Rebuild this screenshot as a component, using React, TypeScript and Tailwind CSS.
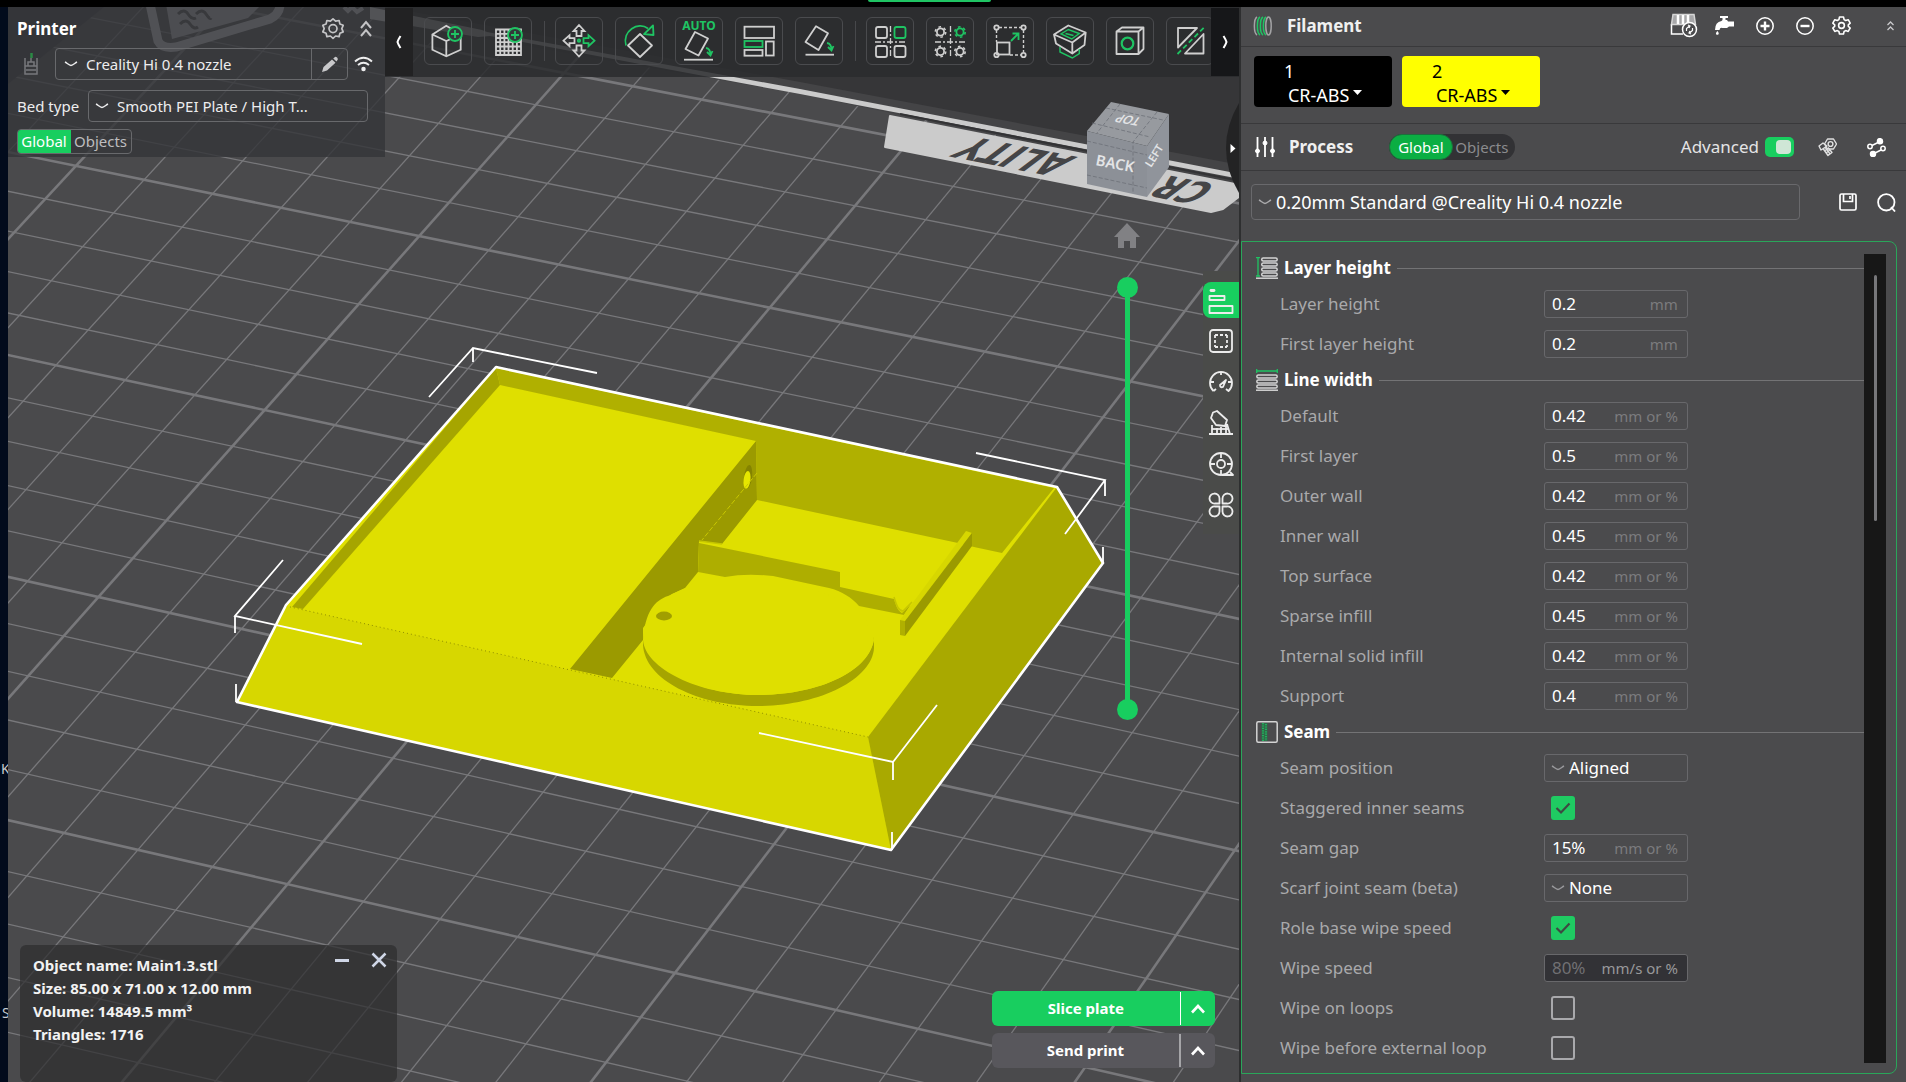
import { useState } from "react"
import type { ReactNode } from "react"
import clsx from "clsx"

const GREEN = "#1fc463"

type Row = {
  label: string
  kind: "number" | "select" | "check"
  value?: string
  unit?: string
  checked?: boolean
  disabled?: boolean
}

const sections: { title: string; icon: ReactNode; rows: Row[] }[] = [
  {
    title: "Layer height",
    icon: <LayerHeightIcon />,
    rows: [
      { label: "Layer height", kind: "number", value: "0.2", unit: "mm" },
      { label: "First layer height", kind: "number", value: "0.2", unit: "mm" },
    ],
  },
  {
    title: "Line width",
    icon: <LineWidthIcon />,
    rows: [
      { label: "Default", kind: "number", value: "0.42", unit: "mm or %" },
      { label: "First layer", kind: "number", value: "0.5", unit: "mm or %" },
      { label: "Outer wall", kind: "number", value: "0.42", unit: "mm or %" },
      { label: "Inner wall", kind: "number", value: "0.45", unit: "mm or %" },
      { label: "Top surface", kind: "number", value: "0.42", unit: "mm or %" },
      { label: "Sparse infill", kind: "number", value: "0.45", unit: "mm or %" },
      { label: "Internal solid infill", kind: "number", value: "0.42", unit: "mm or %" },
      { label: "Support", kind: "number", value: "0.4", unit: "mm or %" },
    ],
  },
  {
    title: "Seam",
    icon: <SeamIcon />,
    rows: [
      { label: "Seam position", kind: "select", value: "Aligned" },
      { label: "Staggered inner seams", kind: "check", checked: true },
      { label: "Seam gap", kind: "number", value: "15%", unit: "mm or %" },
      { label: "Scarf joint seam (beta)", kind: "select", value: "None" },
      { label: "Role base wipe speed", kind: "check", checked: true },
      { label: "Wipe speed", kind: "number", value: "80%", unit: "mm/s or %", disabled: true },
      { label: "Wipe on loops", kind: "check", checked: false },
      { label: "Wipe before external loop", kind: "check", checked: false },
    ],
  },
]

function LayerHeightIcon() {
  return (
    <svg width="22" height="22" viewBox="0 0 22 22" fill="none" aria-hidden="true">
      <path d="M0 0.7h4M0 19h4M2 1v18" stroke={GREEN} strokeWidth="1.3" />
      {[1, 6, 11, 16].map((y) => (
        <rect key={y} x="5.7" y={y} width="15.5" height="3" rx="1.5" stroke="#d4d4d4" strokeWidth="1.5" />
      ))}
      <path d="M0 21.2h22" stroke="#d4d4d4" strokeWidth="1.5" />
    </svg>
  )
}

function LineWidthIcon() {
  return (
    <svg width="22" height="22" viewBox="0 0 22 22" fill="none" aria-hidden="true">
      <path d="M0.7 0v4M21.3 0v4M1 2h20" stroke={GREEN} strokeWidth="1.3" />
      {[6, 11, 16].map((y) => (
        <rect key={y} x="0.8" y={y} width="20.4" height="3" rx="1.5" stroke="#d4d4d4" strokeWidth="1.5" />
      ))}
      <path d="M0 21.2h22" stroke="#d4d4d4" strokeWidth="1.5" />
    </svg>
  )
}

function SeamIcon() {
  return (
    <svg width="22" height="22" viewBox="0 0 22 22" fill="none" aria-hidden="true">
      <rect x="0.8" y="0.8" width="20.4" height="20.4" rx="1.5" stroke="#d4d4d4" strokeWidth="1.5" />
      <rect x="5.5" y="2" width="6" height="18" fill="#2f6b48" />
      <path d="M7 2v18M10 3v17" stroke={GREEN} strokeWidth="1.6" strokeDasharray="1.2 1.2" />
    </svg>
  )
}

function Chevron({ className }: { className?: string }) {
  return (
    <svg className={className} width="14" height="6" viewBox="0 0 14 6" fill="none" aria-hidden="true">
      <path d="M1 1c2 1 4 3.5 6 3.5S11 2 13 1" stroke="currentColor" strokeWidth="1.4" />
    </svg>
  )
}

// ---- build plate scene ----

const at = (a: number, b: number, c: number, k: number) => (a + b * k) / (1 + c * k)

// every fifth line is a bold one
const steps = (from: number, to: number) => Array.from({ length: to - from + 1 }, (_, i) => from + i)

function Grid() {
  return (
    <g stroke="#78787b">
      {steps(-8, 24).map((i) => {
        const k = i / 5
        const y1 = at(152, 188, -0.0423, k)
        const y2 = at(396, 192.6, -0.0366, k)
        const slope = (y2 - y1) / 1194
        return (
          <line
            key={`h${i}`}
            x1={0}
            y1={y1 - 8 * slope}
            x2={1250}
            y2={y2 + 48 * slope}
            strokeWidth={i % 5 === 0 ? 2.6 : 1.3}
          />
        )
      })}
      {steps(-19, 22).map((i) => {
        const k = i / 5
        const x1 = 967 + 402 * k
        const x2 = at(122, 459.8, -0.0155, k)
        const slope = (x2 - x1) / 1010
        return (
          <line
            key={`v${i}`}
            x1={x1 - 72 * slope}
            y1={0}
            x2={x2 + 18 * slope}
            y2={1100}
            strokeWidth={i % 5 === 0 ? 2.6 : 1.3}
          />
        )
      })}
    </g>
  )
}

function Model() {
  return (
    <g>
      <polygon points="496,367 1057,487 1103,563 891,850 237,702 286,605" fill="#dfdf00" />
      {/* front and right outside faces */}
      <polygon points="286,606 868,737 891,850 237,702" fill="#d7d700" />
      <polygon points="1057,487 1103,563 891,850 868,737" fill="#a9a900" />
      {/* back and left inside walls */}
      <polygon points="496,368 1054,488 1002,553 974,547 958,543 757,500 756,441 500,385" fill="#b0b000" />
      <polygon points="496,368 500,385 303,609 292,607" fill="#a6a500" />
      <polygon
        points="756,441 757,500 722,544 699,541 698,572 685,588 672,594 663,601 643,628 643,640 612,678 570,669"
        fill="#9b9a00"
      />
      {/* battery disc */}
      <path
        d="M643 633C644 668 700 695 758 695S872 672 874 637V648C872 680 818 706 758 706S645 680 643 645Z"
        fill="#a5a400"
      />
      <path d="M643 640C645 612 655 600 668 596L690 586L702 572L746 575H771L860 606L874 640C868 672 818 695 758 695S645 668 643 640Z" fill="#dfdf00" />
      <ellipse cx="664" cy="616" rx="8" ry="4.4" fill="#a19f00" />
      {/* divider rib */}
      <path
        d="M699 543L840 572V587L894 599C896 606 898 611 902 613L911 604L904 615L859 606C852 598 842 591 829 588L773 576Q746 573 725 577L698 572Z"
        fill="#aeae00"
      />
      <path d="M699 541L722 544M894 597C897 607 899 611 903 611L912 602" stroke="#c6c600" strokeWidth="1.5" fill="none" />
      {/* long bar */}
      <polygon points="966,531 972,533 905,621 900,620" fill="#d7d700" />
      <polygon points="972,533 972,546 905,636 905,621" fill="#9b9a00" />
      <polygon points="900,620 905,621 905,636 900,635" fill="#b0b000" />
      {/* slot in the wall */}
      <ellipse cx="748" cy="477" rx="4" ry="12" transform="rotate(7 748 477)" fill="#848300" />
      <ellipse cx="747" cy="480" rx="3.4" ry="9" transform="rotate(7 748 480)" fill="#e6e600" />
      <path d="M757 473L702 540" stroke="#c9c800" strokeDasharray="5 2" />
      <path d="M286 606L868 737" stroke="#8f8e00" strokeWidth="1" strokeDasharray="1 3" />
      <polygon
        points="496,367 1057,487 1103,563 891,850 237,702 286,605"
        fill="none"
        stroke="#ffffff"
        strokeWidth="2.6"
        strokeLinejoin="round"
      />
      <g stroke="#ffffff" strokeWidth="1.8" fill="none">
        <path d="M429 397L473 348L597 373M473 348V362" />
        <path d="M976 453L1105 480L1065 534M1105 480V496" />
        <path d="M283 560L235 616L362 644M235 616V633" />
        <path d="M759 733L893 762L937 705M893 762V780" />
        <path d="M236 684V702M892 832V850M1103 547V564" />
      </g>
    </g>
  )
}

function ViewCube() {
  return (
    <g fontFamily="'Noto Sans', sans-serif" fontWeight="600" fill="#e3e4e6">
      <polygon points="1111,102 1169,114 1147,146 1087,131" fill="#979a9f" />
      <polygon points="1087,131 1147,146 1147,197 1087,184" fill="#8c9097" />
      <polygon points="1147,146 1169,114 1169,167 1147,197" fill="#90949b" />
      <path
        d="M1120 104L1097 133M1157 112L1133 142V193M1106 108L1163 120M1092 123L1150 137M1087 141L1147 155M1087 175L1147 188"
        stroke="#6c7077"
        strokeWidth="0.8"
        strokeDasharray="4 2"
        fill="none"
      />
      <text fontSize="15" transform="translate(1095 165) rotate(11)">
        BACK
      </text>
      <text fontSize="12" transform="translate(1142 118) rotate(190) skewX(-25)">
        TOP
      </text>
      <text fontSize="11" transform="translate(1151 168) rotate(-58)">
        LEFT
      </text>
    </g>
  )
}

function Scene() {
  return (
    <svg
      className="absolute inset-0 h-full w-full"
      viewBox="8 7 1231 1075"
      preserveAspectRatio="xMinYMin slice"
      role="img"
      aria-label="Build plate"
    >
      <rect x="0" y="0" width="1906" height="1082" fill="#4a4a4c" />
      <Grid />
      <polygon points="8,7 104,7 8,84" fill="#3a3a3c" />
      {/* area behind the plate */}
      <polygon points="380,0 1240,0 1240,174 800,85 380,6" fill="#363638" />
      <polygon points="380,6 800,82 1240,165 1240,186 800,94 380,20" fill="#444446" />
      <polygon points="370,7 482,30 487,32 800,89 1240,174 1240,179 800,94 490,36 478,37 370,19" fill="#cbcbcb" />
      <polygon points="890,116 1240,185 1240,196 1223,209 1211,212 885,147" fill="#cbcbcb" stroke="#cbcbcb" strokeWidth="2" strokeLinejoin="round" />
      <path d="M900 114L1240 181" stroke="#333335" strokeWidth="2" />
      <g fontFamily="'DejaVu Sans', sans-serif" fontWeight="700" fontSize="33" fill="#454547">
        <text transform="translate(1078 157) rotate(191) skewX(-42)">ALITY</text>
        <text transform="translate(1219 185) rotate(191) skewX(-42)">CR</text>
      </g>
      {/* hot surface mark */}
      <path
        d="M150 4L158 41Q162 49 176 47L270 19Q280 14 280 4"
        fill="none"
        stroke="#c4c4c7"
        strokeWidth="9"
      />
      <polygon points="166,4 172,39 248,18 262,4" fill="#b0b0b3" />
      <path d="M178 14q6-6 10 0t8 4M180 24q6-6 10 0t8 3M196 14q6-6 10 0t5 4" stroke="#4a4a4c" strokeWidth="3" fill="none" />
      <path d="M344 7l4 4 4-4 5 5 6-4" stroke="#c4c4c7" strokeWidth="4" fill="none" />
      <Model />
      <ViewCube />
    </svg>
  )
}

// ---- toolbar ----

function AddBadge({ cx, cy }: { cx: number; cy: number }) {
  return (
    <g stroke={GREEN} strokeWidth="1.8">
      <circle cx={cx} cy={cy} r="7" fill="#33383a" />
      <path d={`M${cx - 4} ${cy}h8M${cx} ${cy - 4}v8`} />
    </g>
  )
}

function SmallGear({ cx, cy, color }: { cx: number; cy: number; color: string }) {
  return (
    <g stroke={color}>
      <circle cx={cx} cy={cy} r="3.6" strokeWidth="1.8" />
      <circle cx={cx} cy={cy} r="5.2" strokeWidth="1.6" strokeDasharray="2.6 2.85" />
    </g>
  )
}

const tools: ({ name: string; art: ReactNode } | null)[] = [
  {
    name: "Add model",
    art: (
      <>
        <path d="M22.3 8.7L8.4 17.5v15.2l13.9 6.6 14.4-6.6V17.5zM8.4 17.5l13.9 6.5 14.4-6.5M22.3 24v15.3" />
        <AddBadge cx={31} cy={17} />
      </>
    ),
  },
  {
    name: "Add plate",
    art: (
      <>
        <path d="M12 12.5h25v25.5H12zM12 16.8h25M12 21h25M12 25.2h25M12 29.5h25M12 33.8h25M16.2 12.5V38M20.4 12.5V38M24.5 12.5V38M28.7 12.5V38M32.9 12.5V38" />
        <AddBadge cx={31} cy={18} />
      </>
    ),
  },
  null,
  {
    name: "Move",
    art: (
      <>
        <path d="M24 8l5.5 6h-3v5h-5v-5h-3zM24 39.5l5.5-6h-3v-5h-5v5h-3zM8.5 23.7l6-5.5v3h5v5h-5v3z" />
        <path d="M39.5 23.7l-6-5.5v3h-5v5h5v3z" stroke={GREEN} />
        <circle cx="24" cy="23.7" r="1.2" stroke={GREEN} />
      </>
    ),
  },
  {
    name: "Rotate",
    art: (
      <>
        <path d="M25 17l12 11.5L25 40 13 28.5z" strokeLinejoin="round" />
        <path d="M11 28.5C7 14 23 4 33 11.5M38 8.500l.5 9.5-9.5-.8z" stroke={GREEN} strokeLinejoin="round" />
      </>
    ),
  },
  {
    name: "Auto orient",
    art: (
      <>
        <text x="24" y="13" textAnchor="middle" fontSize="12" fontWeight="700" fill={GREEN} stroke="none">
          AUTO
        </text>
        <path d="M20 15l13 6.5-9.5 17L10.500 32z" strokeLinejoin="round" />
        <path d="M9 42.7h29" />
        <path d="M31 31c3 .5 4.5 3 4.5 7M32 35l3.500 3.5 2-4.5" stroke={GREEN} />
      </>
    ),
  },
  {
    name: "Arrange",
    art: (
      <>
        <rect x="9.5" y="9.7" width="29.5" height="11.3" />
        <rect x="9.5" y="24" width="18" height="6" stroke={GREEN} />
        <rect x="9.5" y="33" width="18" height="5.7" />
        <rect x="31" y="24.5" width="7.7" height="14" />
      </>
    ),
  },
  {
    name: "Lay on face",
    art: (
      <>
        <path d="M21 9.3l12 7L23.5 33l-13-8z" strokeLinejoin="round" />
        <path d="M10.5 37.7H39" />
        <path d="M32 26c3 .5 4.5 3 4.5 7M33 30l3.500 3.5 2-4.5" stroke={GREEN} />
      </>
    ),
  },
  null,
  {
    name: "Split to objects",
    art: (
      <>
        <rect x="10" y="10" width="11" height="11" rx="2" />
        <rect x="28.5" y="10" width="11" height="11" rx="2" stroke={GREEN} />
        <rect x="10" y="29" width="11" height="11" rx="2" />
        <rect x="28.5" y="29" width="11" height="11" rx="2" />
        <path d="M24.5 9v32M9 25h32" strokeWidth="1.3" strokeDasharray="6 2 2 2" />
      </>
    ),
  },
  {
    name: "Split to parts",
    art: (
      <>
        <SmallGear cx={14.5} cy={15} color="#cfcfcf" />
        <SmallGear cx={34} cy={15} color={GREEN} />
        <SmallGear cx={14.5} cy={34.5} color="#cfcfcf" />
        <SmallGear cx={34} cy={34.5} color="#cfcfcf" />
        <path d="M24.5 9v32M9 25h32" strokeWidth="1.3" strokeDasharray="6 2 2 2" />
      </>
    ),
  },
  {
    name: "Scale",
    art: (
      <>
        <path d="M13 10.5h22M10.5 13v12M37.5 13v22M24 38h11" strokeDasharray="3 2" strokeWidth="1.4" />
        <circle cx="10.5" cy="10.5" r="2.2" />
        <circle cx="37.5" cy="10.5" r="2.2" />
        <circle cx="37.5" cy="38" r="2.2" />
        <circle cx="10.5" cy="38" r="2.2" />
        <rect x="11" y="25.5" width="12.5" height="12" />
        <path d="M25 24l7.5-7.5M26.5 16.5h6V23" stroke={GREEN} />
      </>
    ),
  },
  {
    name: "Hollow",
    art: (
      <>
        <path d="M22.3 8.5L8 17.5l2 9 16.3 10L38.5 28l1.2-12.5zM8 17.5l18.3 8 13.4-10M26.3 25.5v11" strokeLinejoin="round" />
        <path d="M22.3 12.5L15 17l10.7 5 7.6-5.5zM19.5 16.5l8 2M14 30v5l12.3 6 7-4.5v-4.500" stroke={GREEN} strokeWidth="1.4" />
      </>
    ),
  },
  {
    name: "Mesh boolean",
    art: (
      <>
        <path d="M10.5 14.5h22v22.5h-22zM10.5 14.5l5.5-4h21.5v21.5l-5 5M32.5 14.5l5-4" strokeLinejoin="round" />
        <circle cx="21.5" cy="26.5" r="5.8" stroke={GREEN} strokeWidth="2.2" />
      </>
    ),
  },
  {
    name: "Cut",
    art: (
      <>
        <path d="M12 11h19L12 30.5zM37.5 17v19.5H19z" strokeLinejoin="round" />
        <path d="M11.5 37L38 10.5" stroke={GREEN} strokeDasharray="5 3" />
      </>
    ),
  },
]

function Toolbar() {
  return (
    <div className="flex h-[70px] min-w-0 flex-1 bg-[#2a2b2e]/85">
      <button aria-label="Scroll tools left" className="mt-px flex h-[68px] w-7 shrink-0 items-center justify-center bg-[#222223] text-white">
        <svg width="6" height="14" viewBox="0 0 6 14" fill="none" stroke="currentColor" strokeWidth="2">
          <path d="M4.5 1Q2 5 1.5 7 2 9 4.5 13" />
        </svg>
      </button>
      <div className="flex min-w-0 flex-1 gap-3 overflow-hidden pt-2.5 pl-[11px]">
        {tools.map((tool, i) =>
          tool ? (
            <button
              key={tool.name}
              aria-label={tool.name}
              className="h-12 w-12 shrink-0 rounded-md border border-[#4a4b4e]"
            >
              <svg width="46" height="46" viewBox="1 1 46 46" fill="none" stroke="#cfcfcf" strokeWidth="1.8">
                {tool.art}
              </svg>
            </button>
          ) : (
            <div key={i} className="-mr-0.5 mt-1 h-10 w-px shrink-0 bg-[#47484b]" />
          ),
        )}
      </div>
      <button aria-label="Scroll tools right" className="mt-px flex h-[68px] w-7 shrink-0 items-center justify-center bg-[#161719] text-white">
        <svg width="6" height="14" viewBox="0 0 6 14" fill="none" stroke="currentColor" strokeWidth="2">
          <path d="M1.5 1Q4 5 4.500 7 4 9 1.5 13" />
        </svg>
      </button>
    </div>
  )
}

// ---- printer panel ----

function PrinterPanel() {
  return (
    <section className="w-[377px] shrink-0 bg-[#333438]/80 pb-[3px] pl-[9px] text-[15px] text-[#ededee]">
      <div className="flex h-10 items-center pt-1">
        <h2 className="flex-1 text-[17px] font-bold text-white">Printer</h2>
        <button aria-label="Printer settings" className="mr-3.5 text-[#c4c4c6]">
          <svg width="24" height="24" viewBox="0 0 24 24" fill="none" stroke="currentColor" strokeWidth="1.7" strokeLinejoin="round">
            <path d="M12 1.8l2.6 2.4 3.5-.7.8 3.5 3.3 1.3-1.4 3.3 1.4 3.3-3.3 1.3-.8 3.5-3.5-.7L12 21.4l-2.600-2.4-3.5.7-.8-3.5-3.3-1.3 1.4-3.3-1.4-3.3 3.3-1.3.8-3.5 3.5.7z" />
            <circle cx="12" cy="11.6" r="4" />
          </svg>
        </button>
        <button aria-label="Collapse printer panel" className="mr-3 text-[#c4c4c6]">
          <svg width="14" height="18" viewBox="0 0 14 18" fill="none" stroke="currentColor" strokeWidth="2">
            <path d="M2 8l5-6 5 6M2 16l5-6 5 6" />
          </svg>
        </button>
      </div>
      <div className="flex h-[34px] items-center">
        <svg className="ml-1.5 w-4 shrink-0" width="16" height="24" viewBox="0 0 16 24" fill="none" stroke="#77787c" strokeWidth="1.5">
          <path d="M8.5 1v5" stroke="#2b8a45" strokeWidth="2.5" />
          <path d="M2 6v16h12V6M2 14h12M5 10h6v4H5zM8 6v4M3 18h10" />
        </svg>
        <div className="relative ml-4 flex h-8 w-[293px] items-center rounded border border-[#68696c]">
          <Chevron className="pointer-events-none absolute left-2" />
          <select
            aria-label="Printer model"
            className="h-full min-w-0 flex-1 appearance-none bg-transparent pl-[30px] outline-none"
          >
            <option>Creality Hi 0.4 nozzle</option>
          </select>
          <button aria-label="Edit printer" className="flex h-full w-9 items-center justify-center border-l border-[#68696c] text-[#c8c8ca]">
            <svg width="18" height="17" viewBox="0 0 18 17" fill="currentColor">
              <path d="M1 16l1.5-5L11 3.5l3.5 3.3L6 14.5zM12.2 2.5L14 1q1-.5 2 .5t.8 2L15.5 5.6z" />
            </svg>
          </button>
        </div>
        <svg className="ml-1.5" width="19" height="16" viewBox="0 0 19 16" fill="none" stroke="#ededee" strokeWidth="1.9">
          <path d="M1 5.5Q9.5-2 18 5.5M4 9q5.5-4.5 11 0" />
          <circle cx="9.5" cy="13" r="1.3" fill="#ededee" />
        </svg>
      </div>
      <div className="mt-[9px] flex h-8 items-center">
        <label htmlFor="bed" className="w-[71px]">
          Bed type
        </label>
        <div className="relative flex h-8 w-[280px] items-center rounded border border-[#68696c]">
          <Chevron className="pointer-events-none absolute left-1.5" />
          <select id="bed" className="h-full w-full appearance-none bg-transparent pl-7 outline-none">
            <option>Smooth PEI Plate / High T...</option>
          </select>
        </div>
      </div>
      <div className="mt-[7px] flex h-[25px] w-[115px] overflow-hidden rounded border border-[#68696c]">
        <button className="-m-px w-[54px] bg-[#18ce5f] text-white">Global</button>
        <button className="flex-1 text-[#bdbdbf]">Objects</button>
      </div>
    </section>
  )
}

// ---- category strip on the right edge of the viewport ----

const categories: { name: string; art: ReactNode }[] = [
  {
    name: "Quality",
    art: (
      <>
        <path d="M3 3.5h3" strokeWidth="2.8" strokeLinecap="round" />
        <rect x="1.5" y="9" width="15" height="4" />
        <rect x="1.5" y="19" width="23" height="7" />
      </>
    ),
  },
  {
    name: "Strength",
    art: (
      <>
        <rect x="2" y="2" width="22" height="22" rx="3" />
        <path d="M7 7v12M19 7v12M7 7h12M7 19h12" strokeDasharray="3 2" />
      </>
    ),
  },
  {
    name: "Speed",
    art: (
      <>
        <path d="M5.5 22A11 11 0 1 1 20.5 22l-2.5-2M5.5 22l2.5-2M13 3v3M3 13h3M20 13h3" />
        <path d="M12 16l6-5-3 7q-3 1-3-2z" />
      </>
    ),
  },
  {
    name: "Support",
    art: (
      <>
        <path d="M5 2.5L9 1l10 9-2 6-9-1-5-7zM1 24h24M4 24v-9M9 24v-6M13 24v-7M18 24v-9M22 24l-3-10" />
        <path d="M4 19h17" />
      </>
    ),
  },
  {
    name: "Multimaterial",
    art: (
      <>
        <circle cx="13" cy="13" r="11" />
        <circle cx="13" cy="13" r="4" />
        <path d="M13 2v5M13 19v5M2 13h5M19 13h5M14 24h11l-3-3" />
      </>
    ),
  },
  {
    name: "Others",
    art: (
      <path d="M11.5 11.5H7a5 5 0 1 1 4.5-5zM14.5 11.5H19a5 5 0 1 0-4.5-5zM11.5 14.5H7a5 5 0 1 0 4.5 5zM14.5 14.5H19a5 5 0 1 1-4.5 5z" />
    ),
  },
]

function CategoryStrip() {
  return (
    <nav aria-label="Setting categories" className="absolute top-[264px] right-0 flex w-9 flex-col gap-[5px] bg-[#4a4b49] py-[11px]">
      {categories.map((c, i) => (
        <button
          key={c.name}
          aria-label={c.name}
          className={clsx("flex h-9 w-9 items-center justify-center text-[#ececec]", i === 0 && "rounded-l-lg bg-[#18ce5f]")}
        >
          <svg width="26" height="27" viewBox="0 0 26 27" fill="none" stroke="currentColor" strokeWidth="1.8" strokeLinejoin="round">
            {c.art}
          </svg>
        </button>
      ))}
    </nav>
  )
}

function LayerSlider() {
  return (
    <div className="absolute top-[270px] right-[101px] flex h-[443px] w-[21px] justify-center">
      <div className="my-2.5 w-[5px] bg-[#18ce5f]" />
      <span className="absolute top-0 h-[21px] w-[21px] rounded-full bg-[#18ce5f]" />
      <span className="absolute bottom-0 h-[21px] w-[21px] rounded-full bg-[#18ce5f]" />
      <input
        type="range"
        aria-label="Layer range"
        defaultValue={100}
        className="absolute inset-0 h-full w-full opacity-0 [direction:rtl] [writing-mode:vertical-lr]"
      />
    </div>
  )
}

function InfoPanel() {
  return (
    <section className="absolute bottom-0 left-3 h-[137px] w-[377px] rounded-md bg-[#2c2c2d]/70 pt-[9px] pl-[13px] text-[15px] leading-[23px] font-bold text-[#f2f2f2]">
      <p>Object name: Main1.3.stl</p>
      <p>Size: 85.00 x 71.00 x 12.00 mm</p>
      <p>Volume: 14849.5 mm³</p>
      <p>Triangles: 1716</p>
      <div className="absolute top-[7px] right-2.5 flex gap-5 text-[#cfd6e6]">
        <button aria-label="Minimize" className="flex h-4 w-4 items-center">
          <span className="h-[3px] w-[14px] bg-current" />
        </button>
        <button aria-label="Close">
          <svg width="16" height="16" viewBox="0 0 16 16" stroke="currentColor" strokeWidth="2.5">
            <path d="M1.5 1.5l13 13M14.5 1.5l-13 13" />
          </svg>
        </button>
      </div>
    </section>
  )
}

function ActionButton({ label, className, lineClass }: { label: string; className: string; lineClass: string }) {
  return (
    <div className={clsx("flex h-[35px] w-[223px] items-stretch rounded-md text-white", className)}>
      <button className="flex-1 text-[15px] font-bold">{label}</button>
      <span className={clsx("my-px", lineClass)} />
      <button aria-label={`${label} options`} className="flex w-[34px] items-center justify-center">
        <svg width="14" height="10" viewBox="0 0 14 10" fill="none" stroke="currentColor" strokeWidth="2.6">
          <path d="M1 8.5l6-6.5 6 6.5" />
        </svg>
      </button>
    </div>
  )
}

function Viewport() {
  return (
    <main className="relative min-w-0 flex-1 overflow-hidden bg-[#4a4a4c]">
      <Scene />
      <div className="relative flex items-start">
        <PrinterPanel />
        <Toolbar />
      </div>
      <button aria-label="Home view" className="absolute top-[216px] right-[99px] text-[#818184]">
        <svg width="26" height="25" viewBox="0 0 26 25" fill="currentColor">
          <path d="M13 0l13 14h-4v11h-6v-7h-6v7H4V14H0z" />
        </svg>
      </button>
      <button aria-label="Collapse settings" className="absolute top-24 right-0">
        <svg width="13" height="90" viewBox="0 0 13 90">
          <path d="M13 0Q0 22 0 45T13 90z" fill="#232324" />
          <path d="M4.5 41l5 4.5-5 4.500z" fill="#fff" />
        </svg>
      </button>
      <LayerSlider />
      <CategoryStrip />
      <InfoPanel />
      <div className="absolute right-6 bottom-3.5 flex flex-col gap-[7px]">
        <ActionButton label="Slice plate" className="bg-[#18ce5f]" lineClass="w-px bg-white" />
        <ActionButton label="Send print" className="bg-[#58575c]" lineClass="w-0.5 bg-[#a5a5a8]" />
      </div>
    </main>
  )
}

// ---- settings panel ----

function Gear() {
  return (
    <svg width="19" height="19" viewBox="0 0 19 19" fill="none" stroke="currentColor" strokeWidth="1.6" strokeLinejoin="round">
      <path d="M7.5 1h4l.6 2.6 1.6.9 2.5-.8 2 3.4-1.9 1.7v1.5l1.9 1.7-2 3.4-2.5-.8-1.6.9-.6 2.5h-4l-.6-2.5-1.6-.9-2.5.8-2-3.4 1.900-1.7V8.8L.8 7.1l2-3.4 2.5.8 1.6-.9z" />
      <circle cx="9.5" cy="9.5" r="2.9" />
    </svg>
  )
}

function FilamentHeader() {
  return (
    <div className="flex h-[40px] items-center border-b border-[#39393b] pr-3 pb-0.5 pl-3 text-white">
      <svg width="19" height="20" viewBox="0 0 19 20" fill="none" strokeWidth="1.5">
        <path d="M4 1C.5 3 .5 17 4 19" stroke="#a3a3a5" />
        <path d="M7 1C3.5 3 3.5 17 7 19M10 1C6.5 3 6.5 17 10 19M13 1c-3.5 2-3.5 16 0 18" stroke={GREEN} />
        <ellipse cx="15.5" cy="10" rx="2.7" ry="9" stroke="#a3a3a5" />
      </svg>
      <h2 className="flex-1 pl-[15px] text-[17px] font-bold text-[#f0f0f0]">Filament</h2>
      <button aria-label="Sync filament list" className="mr-[17px]">
        <svg width="28" height="25" viewBox="0 0 28 25" fill="none" stroke="currentColor" strokeWidth="1.5">
          <path d="M3 1.5h21l1.5 10H1.5z" fill="#a7a7a9" stroke="#d5d5d5" />
          <path d="M8 2v9M13 2v9M18 2v9" stroke="#fff" strokeWidth="2.5" />
          <path d="M1.5 11.5V21H13" />
          <circle cx="19.5" cy="16.5" r="7" fill="#4b4b4d" />
          <path d="M16.5 18v-2.5l3-2.5M22.5 15v2.5l-3 2.500M18 12l2 1-1 2M21 21l-2-1 1-2" strokeWidth="1.2" />
        </svg>
      </button>
      <button aria-label="Flush volumes" className="mr-[22px]">
        <svg width="19" height="19" viewBox="0 0 19 19" fill="currentColor">
          <path d="M5 0h8v2h-2.5v2H12l1 1.5h6v5h-5L12 12H7.5Q5 11 4.5 14H0Q0 6 6.5 5l1-1V2H5zM2.3 15q2 2 1.2 3.3-1.2 1-2.4 0Q.5 17 2.3 15z" />
        </svg>
      </button>
      <button aria-label="Add filament" className="mr-[22px]">
        <svg width="18" height="18" viewBox="0 0 18 18" fill="none" stroke="currentColor">
          <circle cx="9" cy="9" r="8.2" strokeWidth="1.5" />
          <path d="M9 4.5v9M4.5 9h9" strokeWidth="2.4" />
        </svg>
      </button>
      <button aria-label="Remove filament" className="mr-[18px]">
        <svg width="18" height="18" viewBox="0 0 18 18" fill="none" stroke="currentColor">
          <circle cx="9" cy="9" r="8.2" strokeWidth="1.5" />
          <path d="M4.5 9h9" strokeWidth="2.4" />
        </svg>
      </button>
      <button aria-label="Filament settings" className="mr-[36px]">
        <Gear />
      </button>
      <button aria-label="Collapse filament" className="text-[#c9c9cb]">
        <svg width="7" height="10" viewBox="0 0 7 10" fill="none" stroke="currentColor" strokeWidth="1.3">
          <path d="M.5 4l3-3 3 3M.5 9l3-3 3 3" />
        </svg>
      </button>
    </div>
  )
}

function Swatch({ index, material, className }: { index: number; material: string; className: string }) {
  return (
    <button className={clsx("h-[51px] w-[138px] rounded-sm pt-0.5 pl-[30px] text-left text-[18px] leading-6", className)}>
      <span className="block">{index}</span>
      <span className="flex items-center pl-1">
        {material}
        <svg className="-mt-1 ml-1" width="9" height="5" viewBox="0 0 9 5" fill="currentColor">
          <path d="M0 0h9L4.5 5z" />
        </svg>
      </span>
    </button>
  )
}

function ProcessHeader() {
  const [advanced, setAdvanced] = useState(true)
  return (
    <div className="flex h-[47px] items-center border-b border-[#39393b] pr-5 pl-3.5 text-white">
      <svg width="20" height="20" viewBox="0 0 20 20" fill="currentColor" stroke="currentColor">
        <path d="M2.5 0v20M10 0v20M17.5 0v20" strokeWidth="1.8" />
        <circle cx="2.5" cy="14" r="2" />
        <circle cx="10" cy="6" r="2" />
        <circle cx="17.5" cy="14" r="2" />
      </svg>
      <h2 className="w-[114px] pl-[14px] text-[17px] font-bold text-[#f0f0f0]">Process</h2>
      <div className="flex h-[26px] w-[126px] rounded-full bg-[#323235] text-[15px]">
        <button className="w-[64px] rounded-full border border-[#1c6f3c] bg-[#0bae43] text-white">Global</button>
        <button className="flex-1 pr-1 text-[#8b8b8e]">Objects</button>
      </div>
      <div className="flex-1" />
      <label htmlFor="advanced" className="mr-1.5 text-[17px] text-[#e4e4e5]">
        Advanced
      </label>
      <span className="relative mr-6 flex h-5 w-[29px]">
        <input
          id="advanced"
          type="checkbox"
          checked={advanced}
          onChange={() => setAdvanced(!advanced)}
          className="h-5 w-[29px] appearance-none rounded-[5px] bg-[#77777a] checked:bg-[#18ce5f]"
        />
        <span className={clsx("pointer-events-none absolute top-[3px] h-[14px] w-[15px] rounded bg-[#cfe6d6]", advanced ? "right-[3px]" : "left-[3px]")} />
      </span>
      <button aria-label="Hardware profile" className="mr-[30px]">
        <svg width="19" height="19" viewBox="0 0 19 19" fill="none" stroke="#e0e0e0" strokeWidth="1.4" strokeLinejoin="round">
          <path d="M9.5 1h6l3 5-3 5h-6L6.5 6z" />
          <circle cx="12.5" cy="6" r="2.4" />
          <path d="M1 8l4-3 4 3-6 4zM5 10.500l5 7 4-3-4-5M7 9l5 7M8 15l4-3M6.500 13l4-3" />
        </svg>
      </button>
      <button aria-label="Compare presets">
        <svg width="19" height="19" viewBox="0 0 19 19" fill="none" stroke="currentColor" strokeWidth="1.5">
          <path d="M5 7.5l6-3M8 15l6-3" />
          <circle cx="3" cy="8.5" r="2.2" />
          <circle cx="13" cy="3.2" r="2.5" fill="currentColor" />
          <circle cx="6" cy="16" r="2.5" fill="currentColor" />
          <circle cx="16" cy="10.5" r="2.2" />
        </svg>
      </button>
    </div>
  )
}

function PresetRow() {
  return (
    <div className="flex items-center pt-[13px] pr-2.5 pl-2.5 text-white">
      <div className="relative flex h-9 flex-1 items-center rounded-sm border border-[#69696c]">
        <Chevron className="pointer-events-none absolute left-1.5 text-[#aaaaac]" />
        <select aria-label="Process preset" className="h-full w-full appearance-none bg-transparent pl-6 text-[18px] outline-none">
          <option>0.20mm Standard @Creality Hi 0.4 nozzle</option>
        </select>
      </div>
      <button aria-label="Save preset" className="ml-[39px]">
        <svg width="18" height="18" viewBox="0 0 18 18" fill="none" stroke="currentColor" strokeWidth="1.7">
          <rect x="1" y="1" width="16" height="16" rx="1.5" />
          <path d="M4.5 1v7.5h9V1M11 3v3" />
        </svg>
      </button>
      <button aria-label="Search settings" className="ml-5">
        <svg width="19" height="19" viewBox="0 0 19 19" fill="none" stroke="currentColor" strokeWidth="1.8">
          <circle cx="9.3" cy="9.3" r="8.2" />
          <path d="M14 14l4 4.5" />
        </svg>
      </button>
    </div>
  )
}

function SettingRow({ row, id }: { row: Row; id: string }) {
  return (
    <div className="flex h-10 items-center pl-[38px]">
      <label htmlFor={id} className="w-[264px] text-[17px] text-[#a9a9ab]">
        {row.label}
      </label>
      {row.kind === "number" && (
        <div
          className={clsx(
            "flex h-7 w-36 items-center rounded-[3px] border border-[#68686b] pr-[9px] pl-[7px]",
            row.disabled && "bg-[#323236]",
          )}
        >
          <input
            id={id}
            type="text"
            defaultValue={row.value}
            disabled={row.disabled}
            className="w-0 min-w-0 flex-1 bg-transparent text-[17px] text-white outline-none disabled:text-[#707073]"
          />
          <span className={clsx("text-[15px]", row.disabled ? "text-[#98989a]" : "text-[#7b7b7e]")}>{row.unit}</span>
        </div>
      )}
      {row.kind === "select" && (
        <div className="relative flex h-7 w-36 items-center rounded-[3px] border border-[#68686b]">
          <Chevron className="pointer-events-none absolute left-1.5 text-[#98989b]" />
          <select id={id} className="h-full w-full appearance-none bg-transparent pl-6 text-[17px] text-white outline-none">
            <option>{row.value}</option>
          </select>
        </div>
      )}
      {row.kind === "check" && (
        <span className="relative ml-[7px] flex">
          <input
            id={id}
            type="checkbox"
            defaultChecked={row.checked}
            className="peer h-6 w-6 appearance-none rounded-[3px] border-2 border-[#a9a9ac] checked:border-[#1fcb62] checked:bg-[#1fcb62]"
          />
          <svg
            className="pointer-events-none absolute top-1.5 left-1 hidden peer-checked:block"
            width="16"
            height="13"
            viewBox="0 0 16 13"
            fill="none"
            stroke="#3d4a42"
            strokeWidth="2.2"
          >
            <path d="M1.5 6l4.5 4.5L14.5 1.5" />
          </svg>
        </span>
      )}
    </div>
  )
}

function SettingsPanel() {
  return (
    <aside className="flex w-[35%] shrink-0 flex-col border-l-2 border-[#2e2f30] bg-[#4b4b4d]">
      <FilamentHeader />
      <div className="flex h-[77px] gap-2.5 border-b border-[#39393b] pt-[9px] pl-[13px]">
        <Swatch index={1} material="CR-ABS" className="bg-black text-white" />
        <Swatch index={2} material="CR-ABS" className="bg-[#ffff00] text-black" />
      </div>
      <ProcessHeader />
      <PresetRow />
      <div className="mt-[21px] mr-[9px] mb-2 flex min-h-0 flex-1 rounded-r-lg border border-[#2aa65a]">
        <div className="min-w-0 flex-1 overflow-hidden pt-2.5">
          {sections.map((section) => (
            <section key={section.title}>
              <div className="flex h-8 items-center pl-3.5">
                {section.icon}
                <h3 className="pr-[6px] pl-1.5 text-[17px] font-bold text-white">{section.title}</h3>
                <div className="h-px flex-1 bg-[#737375]" />
              </div>
              {section.rows.map((row) => (
                <SettingRow key={row.label} row={row} id={`${section.title}-${row.label}`.replace(/\W+/g, "-").toLowerCase()} />
              ))}
            </section>
          ))}
        </div>
        <div className="mt-3 mr-2.5 mb-2.5 w-[22px] bg-[#171717] pt-[21px]">
          <div className="mx-auto h-[246px] w-[3px] rounded-full bg-[#77777a]" />
        </div>
      </div>
    </aside>
  )
}

export default function App() {
  return (
    <div className="flex h-screen flex-col overflow-hidden bg-black font-['Noto_Sans',sans-serif]">
      <header className="relative h-[7px] shrink-0">
        <div className="absolute top-0 left-[868px] h-0.5 w-[123px] rounded-b bg-[#1fc463]" />
      </header>
      <div className="flex min-h-0 flex-1">
        <div className="relative w-2 shrink-0 overflow-hidden bg-[#020b1c] text-sm text-[#c9cbd0]">
          <span className="absolute top-[752px] left-px">K</span>
          <span className="absolute top-[996px] left-0.5">S</span>
        </div>
        <Viewport />
        <SettingsPanel />
      </div>
    </div>
  )
}
